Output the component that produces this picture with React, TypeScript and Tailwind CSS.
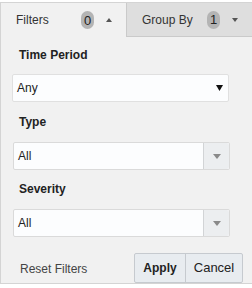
import React from 'react';

function Badge({ n }: { n: string }) {
    return (
        <span className="inline-flex h-[18px] w-[13px] items-center justify-center rounded-full bg-[#b4b4b4] text-[13px] leading-none text-[#222]">
            {n}
        </span>
    );
}

function Caret({ up }: { up?: boolean }) {
    return (
        <svg width="6" height="4" viewBox="0 0 6 4" className="block">
            <path d={up ? 'M0 4 L3 0 L6 4 Z' : 'M0 0 L6 0 L3 4 Z'} fill="#555" />
        </svg>
    );
}

function Label({ text, className = '' }: { text: string; className?: string }) {
    return <div className={`pl-[7px] text-[12px] font-bold leading-[16px] text-[#222] ${className}`}>{text}</div>;
}

function ComboSelect({ value }: { value: string }) {
    return (
        <div className="flex h-[28px] w-[217px] rounded-[2px] border border-[#dadada] bg-[#fcfdfe]">
            <div className="flex flex-1 items-center pl-[4px] text-[12px] text-[#222]">{value}</div>
            <div className="flex w-[26px] items-center justify-center rounded-r-[2px] border-l border-[#d2d4d6] bg-[#eceef0]">
                <svg width="8" height="5" viewBox="0 0 8 5">
                    <path d="M0 0 L8 0 L4 5 Z" fill="#8a8a8a" />
                </svg>
            </div>
        </div>
    );
}

export default function App() {
    return (
        <div className="h-[288px] w-[252px] bg-white pt-[2px] font-['Liberation_Sans',Arial,sans-serif]">
            <div className="flex flex-col border-t border-l border-b border-[#d4d4d4] bg-[#f1f1f1]">
                <div className="flex h-[34px]">
                    <div className="flex w-[125px] items-center pl-[15px] text-[12px] text-[#333]">
                        <span className="w-[65px]">Filters</span>
                        <Badge n="0" />
                        <span className="ml-[12px] mb-[1px]"><Caret up /></span>
                    </div>
                    <div className="flex flex-1 items-center border-l border-b border-[#cacaca] bg-[#dedede] pl-[15px] text-[12px] text-[#333]">
                        <span className="w-[65px]">Group By</span>
                        <Badge n="1" />
                        <span className="ml-[12px] mt-[1px]"><Caret /></span>
                    </div>
                </div>

                <div className="pl-[11px] pt-[10px]">
                    <Label text="Time Period" />
                    <div className="mt-[11px] flex h-[28px] w-[217px] items-center justify-between rounded-[2px] border border-[#e0e0e0] bg-[#fcfdfe] pl-[4px] pr-[5px] text-[12px] text-[#222]">
                        <span>Any</span>
                        <svg width="7" height="6" viewBox="0 0 7 6">
                            <path d="M0 0 L7 0 L3.5 6 Z" fill="#111" />
                        </svg>
                    </div>

                    <Label text="Type" className="mt-[12px]" />
                    <div className="mt-[12px] pl-[1px]">
                        <ComboSelect value="All" />
                    </div>

                    <Label text="Severity" className="mt-[11px]" />
                    <div className="mt-[12px] pl-[1px]">
                        <ComboSelect value="All" />
                    </div>
                </div>

                <div className="mt-[16px] flex items-center pl-[19px] pr-[9px]">
                    <span className="flex-1 pt-[2px] text-[12px] text-[#444]">Reset Filters</span>
                    <div className="flex h-[30px] rounded-[2px] border border-[#c6cacf] bg-[#e8ecf0]">
                        <button className="w-[50px] text-[12px] font-bold text-[#222]">Apply</button>
                        <button className="w-[57px] border-l border-[#c6cacf] text-[13px] text-[#222]">Cancel</button>
                    </div>
                </div>
            </div>
        </div>
    );
}
